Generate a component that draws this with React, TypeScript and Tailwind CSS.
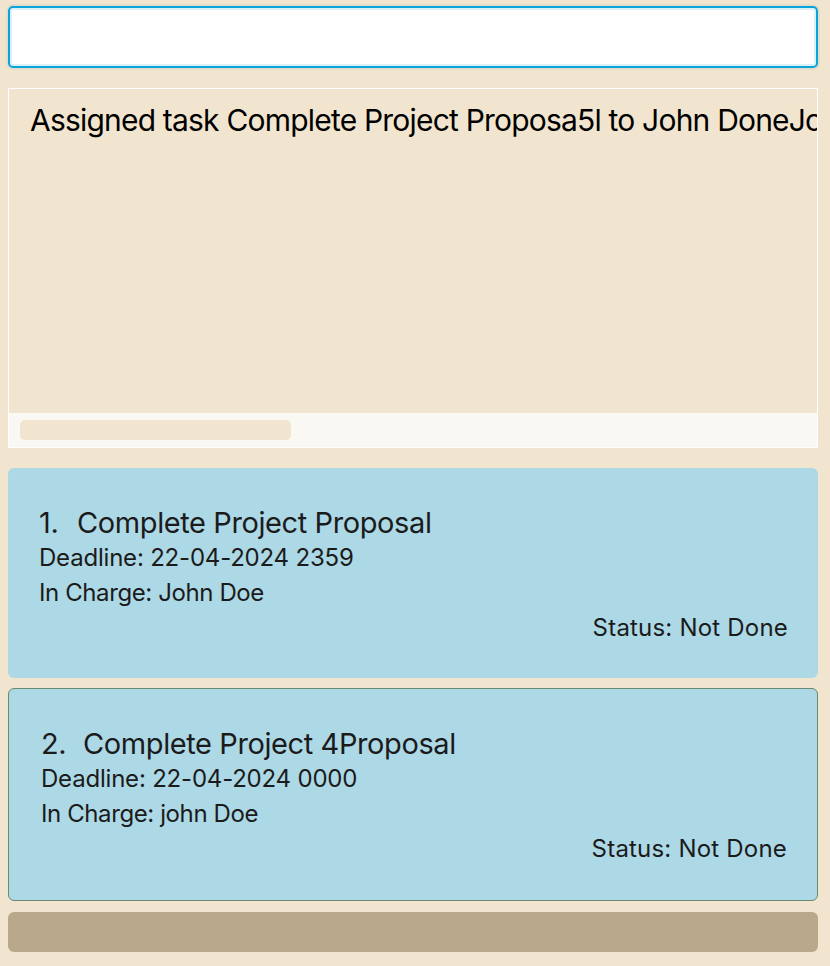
const TASKS = [
  {
    id: 1,
    title: 'Complete Project Proposal',
    deadline: '22-04-2024 2359',
    inCharge: 'John Doe',
    status: 'Not Done',
    selected: false,
  },
  {
    id: 2,
    title: 'Complete Project 4Proposal',
    deadline: '22-04-2024 0000',
    inCharge: 'john Doe',
    status: 'Not Done',
    selected: true,
  },
];

function TaskCard({ task }: { task: (typeof TASKS)[number] }) {
  return (
    <div
      className={
        task.selected
          ? 'flex h-[213px] flex-col rounded-[6px] border-[1.5px] border-[#6a8a70] bg-[#add8e6] pl-[32px] pr-[30px] pt-[36px]'
          : 'flex h-[210px] flex-col rounded-[6px] bg-[#add8e6] pl-[31px] pr-[30px] pt-[36px]'
      }
    >
      <div className="flex h-[36px] items-center text-[29px] leading-none tracking-[-0.4px] text-[#1b1b1b]">
        <span className={task.selected ? 'w-[42px]' : 'w-[38px]'}>{task.id}.</span>
        <span>{task.title}</span>
      </div>
      <div className="flex h-[35px] items-center text-[24px] tracking-[-0.2px] text-[#1b1b1b]">
        Deadline: {task.deadline}
      </div>
      <div className="flex h-[35px] items-center text-[24px] tracking-[-0.4px] text-[#1b1b1b]">
        In Charge: {task.inCharge}
      </div>
      <div className="flex h-[35px] items-center justify-end text-[24px] tracking-[0.2px] text-[#1b1b1b]">
        Status: {task.status}
      </div>
    </div>
  );
}

export default function App() {
  return (
    <div
      className="flex h-[966px] w-[830px] flex-col bg-[#f2e5cf] pl-[8px] pr-[12px] pt-[6px]"
      style={{ fontFamily: 'Inter, "Noto Sans", sans-serif' }}
    >
      <div className="h-[62px] rounded-[5px] border-2 border-[#0aa3da] bg-white shadow-[inset_0_0_0_2px_#dcf0f8,0_0_0_2px_#e3dccb]" />

      <div className="mt-[20px] flex h-[360px] flex-col border border-white">
        <div className="flex-1 overflow-hidden whitespace-nowrap pl-[21px] pt-[9px] text-[30px] tracking-[-0.8px] text-black">
          Assigned task Complete Project Proposa5l to John DoneJo
        </div>
        <div className="flex h-[34px] items-center bg-[#f9f8f2] px-[11px]">
          <div className="h-[20px] w-[271px] rounded-[5px] bg-[#f2e5cf]" />
        </div>
      </div>

      <div className="mt-[20px] flex flex-col gap-[10px]">
        {TASKS.map((task) => (
          <TaskCard key={task.id} task={task} />
        ))}
        <div className="mt-[1px] h-[40px] rounded-[6px] bg-[#b9a98a]" />
      </div>
    </div>
  );
}
